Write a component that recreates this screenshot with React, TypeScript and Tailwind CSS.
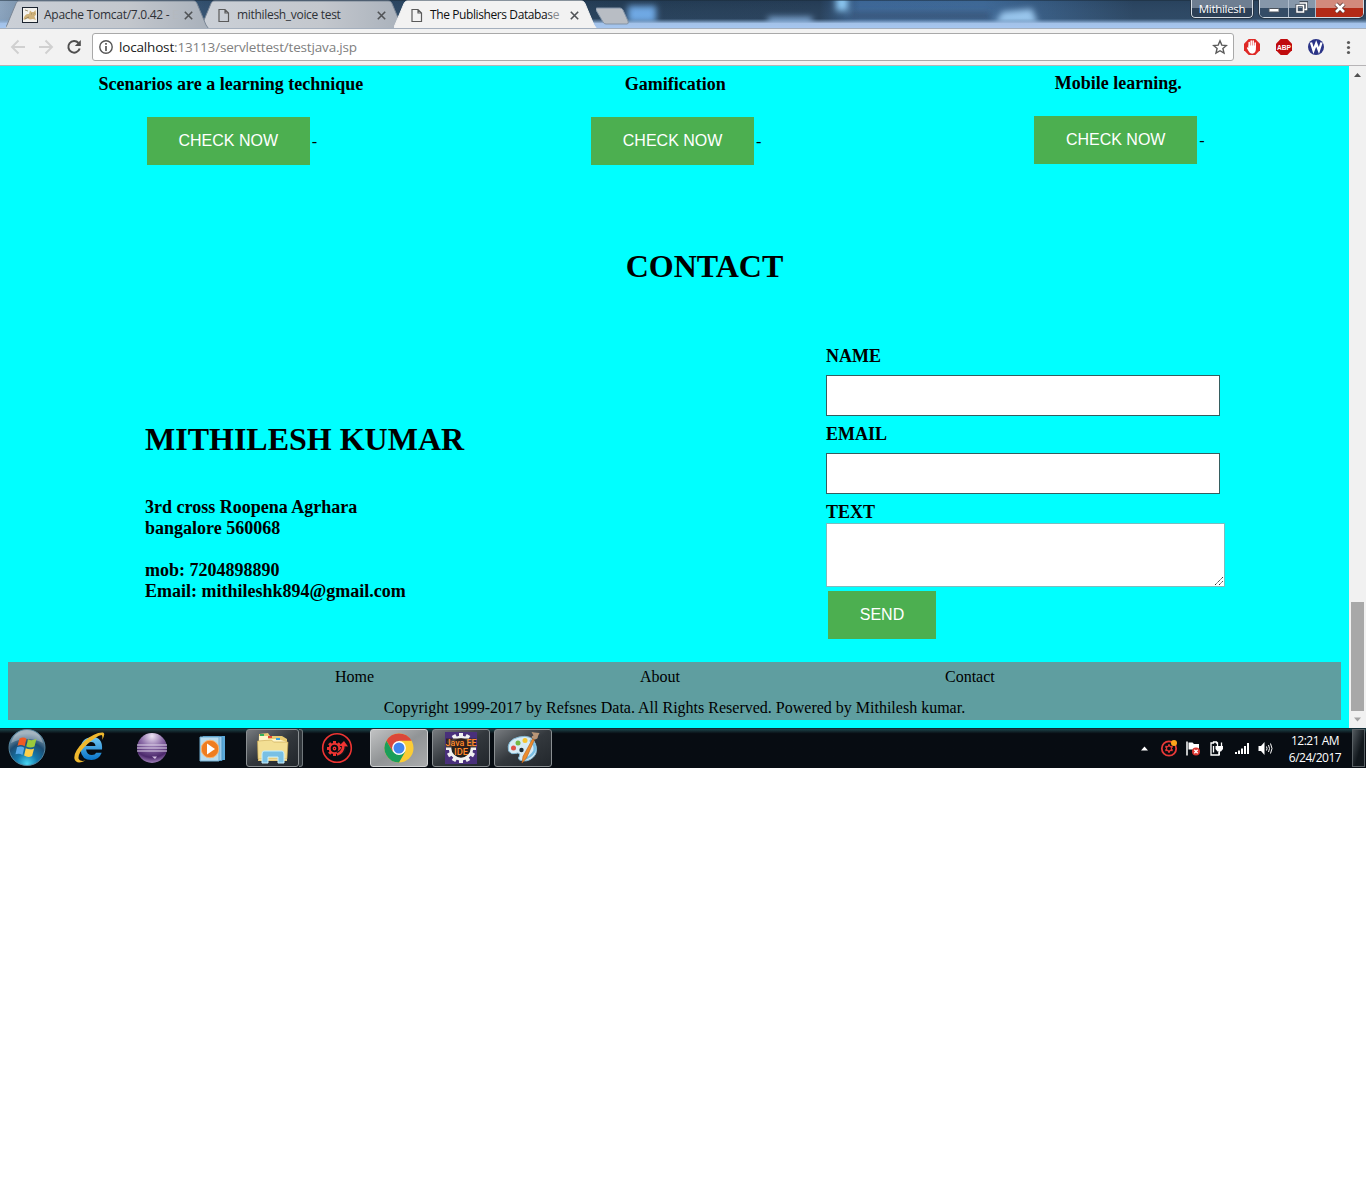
import React from "react";

const UI = "font-['Open_Sans','Noto_Sans',sans-serif]";

function TabShape({ active }: { active?: boolean }) {
  return (
    <svg className="absolute inset-0" width="203" height="28" viewBox="0 0 203 28">
      <defs>
        <linearGradient id="tabIdle" x1="0" y1="0" x2="1" y2="0">
          <stop offset="0" stopColor="#cbd0d7" />
          <stop offset=".6" stopColor="#c3c7cd" />
          <stop offset="1" stopColor="#a9b1bb" />
        </linearGradient>
      </defs>
      <path
        d="M-1 28.500 L1 25 L10 3.500 C11 1.500 12 1 14 1 H187 C189 1 190 1.500 191 3.500 L200 25 L202.500 28.500 Z"
        fill={active ? "#f2f2f2" : "url(#tabIdle)"}
        stroke={active ? "#f2f2f2" : "#7b8796"}
      />
    </svg>
  );
}

function PageIcon() {
  return (
    <svg width="12" height="15" viewBox="0 0 12 15" fill="none" stroke="#5a5a5a" strokeWidth="1.2">
      <path d="M1 1.500h6l3.500 3.500v8.500H1zM7 1.500V5h3.500" />
    </svg>
  );
}

function CatIcon() {
  return (
    <svg width="16" height="16" viewBox="0 0 16 16">
      <rect x=".5" y=".5" width="15" height="15" fill="#f3f2ee" stroke="#1b2430" />
      <path d="M1.500 12c1-4 3-5.500 5.500-5L8 3.500l1.700 1.600h2L13.500 3l.6 4.500-1.700 2L14 13l-3-1-3 .5-3-1.500-3 2z" fill="#cfb27a" />
      <path d="M9 6.500l1 .8M12.500 6.300l-.8.8M3 12l4-2M3 3l3 1" stroke="#7d6d48" strokeWidth=".7" />
    </svg>
  );
}

function CloseX() {
  return (
    <svg width="9" height="9" viewBox="0 0 9 9">
      <path d="M.8.800l7.400 7.400M8.200.8L.8 8.200" stroke="#505356" strokeWidth="1.600" />
    </svg>
  );
}

function TitleBar() {
  return (
    <div className="relative flex h-7 overflow-hidden bg-[#243c56]">
      <svg className="absolute inset-0" width="1366" height="28" viewBox="0 0 1366 28">
        <defs>
          <linearGradient id="aero" x1="0" x2="1366" y1="0" y2="0" gradientUnits="userSpaceOnUse">
            <stop offset="0" stopColor="#8ca4bd" />
            <stop offset=".03" stopColor="#6c839b" />
            <stop offset=".15" stopColor="#304d6b" />
            <stop offset=".45" stopColor="#223a52" />
            <stop offset=".6" stopColor="#243b54" />
            <stop offset=".63" stopColor="#3b6595" />
            <stop offset=".72" stopColor="#3c6694" />
            <stop offset=".83" stopColor="#28425d" />
            <stop offset="1" stopColor="#28425c" />
          </linearGradient>
          <linearGradient id="lowerGlow" x1="0" x2="0" y1="0" y2="1">
            <stop offset="0" stopColor="#a7c7ef" stopOpacity="0" />
            <stop offset=".66" stopColor="#6b90b6" stopOpacity=".1" />
            <stop offset=".84" stopColor="#a3c2e9" />
            <stop offset="1" stopColor="#a6c6ef" />
          </linearGradient>
          <filter id="soft" x="-50%" y="-80%" width="200%" height="260%">
            <feGaussianBlur stdDeviation="3" />
          </filter>
        </defs>
        <rect width="1366" height="28" fill="url(#aero)" />
        <g filter="url(#soft)">
          <rect x="850" y="13" width="140" height="6" fill="#304e6f" />
          <rect x="628" y="6" width="28" height="17" fill="#6ea9e6" />
          <rect x="768" y="17" width="44" height="8" fill="#80a9d6" />
          <rect x="836" y="-4" width="12" height="15" fill="#8bc7f2" />
          <path d="M995 24l7-12 30-3 6 15z" fill="#9dcbf2" />
        </g>
        <rect width="1366" height="28" fill="url(#lowerGlow)" />
        <rect width="1366" height="1" fill="#1a2938" opacity=".5" />
      </svg>
      <div className="relative z-10 ml-[6px] flex w-[203px] shrink-0">
        <TabShape />
        <div className={`relative flex w-full items-center pl-4 pt-0.5 ${UI}`}>
          <CatIcon />
          <span className="ml-[6px] w-[130px] whitespace-nowrap text-[12px] tracking-[-0.27px] text-[#2e3136]">Apache Tomcat/7.0.42 - <span className="text-[#b4b9bf]">E</span></span>
          <span className="ml-[10px]"><CloseX /></span>
        </div>
      </div>
      <div className="relative -ml-[8px] flex w-[203px] shrink-0">
        <TabShape />
        <div className={`relative flex w-full items-center pl-[17px] pt-0.5 ${UI}`}>
          <PageIcon />
          <span className="ml-[7px] w-[130px] whitespace-nowrap text-[12px] tracking-[-0.31px] text-[#2e3136]">mithilesh_voice test</span>
          <span className="ml-[10px]"><CloseX /></span>
        </div>
      </div>
      <div className="relative z-20 -ml-[10px] flex w-[203px] shrink-0">
        <TabShape active />
        <div className={`relative flex w-full items-center pl-[17px] pt-0.5 ${UI}`}>
          <PageIcon />
          <span className="ml-[7px] w-[130px] whitespace-nowrap text-[12px] tracking-[-0.4px] text-[#101010]">The Publishers Databa<span className="text-[#55585c]">s</span><span className="text-[#8b8e91]">e</span></span>
          <span className="ml-[10px]"><CloseX /></span>
        </div>
      </div>
      <svg className="relative -ml-px" width="36" height="28" viewBox="0 0 36 28">
        <path d="M2 8h23q2 0 3 2l5 11q1 3-1 3H11q-2 0-3-2L1 10q-1-2 1-2z" transform="translate(-1)" fill="#b8bdc4" stroke="#8293a7" />
      </svg>
      <div className={`relative ml-auto mr-[2px] flex items-start ${UI}`}>
        <div className="mr-[6px] flex h-[18px] w-[62px] items-center justify-center rounded-b-[4px] border border-t-0 border-[#d5dde5] bg-linear-to-b from-[#6e7e91] from-50% to-[#2d4056] to-50% text-[11.5px] tracking-[-0.3px] text-white outline outline-[#263545]">Mithilesh</div>
        <div className="flex h-[18px] overflow-hidden rounded-b-[5px] border border-t-0 border-[#d0dae4] outline outline-[#263545]">
          <div className="flex w-[29px] justify-center border-r border-[#aebccc] bg-linear-to-b from-[#8697aa] from-50% to-[#344c66] to-50%">
            <svg width="14" height="17" viewBox="0 0 14 17"><rect x="2" y="8.500" width="10" height="3.500" rx=".5" fill="#fff" stroke="#4c535c" /></svg>
          </div>
          <div className="flex w-[27px] justify-center border-r border-[#aebccc] bg-linear-to-b from-[#8697aa] from-50% to-[#344c66] to-50%">
            <svg width="14" height="17" viewBox="0 0 14 17" fill="none"><path d="M4.500 2.500h7v7h-2M2 5.500h6.500v6.500h-6.500z" stroke="#414b58" strokeWidth="3" /><path d="M4.500 3h7v6.500h-2M2 5.500h6.500v6.500h-6.500z" stroke="#fff" strokeWidth="1.500" /></svg>
          </div>
          <div className="flex w-[47px] justify-center bg-linear-to-b from-[#d28a7c] from-50% to-[#b32a16] to-50%">
            <svg width="14" height="17" viewBox="0 0 14 17"><path d="M3 4l8 8M11 4l-8 8" stroke="#5b3330" strokeWidth="4.200" /><path d="M3 4l8 8M11 4l-8 8" stroke="#fff" strokeWidth="2.600" /></svg>
          </div>
        </div>
      </div>
    </div>
  );
}

function Toolbar() {
  return (
    <div className="flex h-[38px] items-center border-y border-t-[#a4afbd] border-b-[#b6b4b6] bg-[#f2f2f2]">
      <svg className="shrink-0" width="92" height="36" viewBox="0 0 92 36" fill="none">
        <path d="M25 18H12.500M18.500 11.500L12 18l6.500 6.500" stroke="#d0d0d0" strokeWidth="1.900" />
        <path d="M39 18h12.500M45.500 11.500L52 18l-6.500 6.500" stroke="#d0d0d0" strokeWidth="1.900" />
        <path d="M78.500 14A5.800 5.800 0 1 0 79.700 19.500" stroke="#4e4e4e" strokeWidth="2" />
        <path d="M80.800 11v6h-6z" fill="#4e4e4e" />
      </svg>
      <div className="flex h-7 w-[1142px] items-center rounded-[3px] border border-[#a9a9a9] bg-white pl-[6px] pr-[5px]">
        <svg width="14" height="14" viewBox="0 0 14 14" fill="none" stroke="#555" strokeWidth="1.400"><circle cx="7" cy="7" r="6.200" /><path d="M7 6v5M7 3v1.700" strokeWidth="1.700" /></svg>
        <span className={`ml-[6px] text-[13.500px] tracking-[-0.17px] text-[#808080] ${UI}`}><span className="text-[#202020]">localhost</span>:13113/servlettest/testjava.jsp</span>
        <svg className="ml-auto" width="16" height="16" viewBox="0 0 16 16" fill="none" stroke="#5a5a5a" strokeWidth="1.400"><path d="M8 1.800l1.800 4.300 4.600.4-3.500 3 1.100 4.600L8 11.700l-4 2.400 1.100-4.600-3.500-3 4.600-.4z" /></svg>
      </div>
      <svg width="132" height="36" viewBox="0 0 132 36">
        <path d="M14.700 10h6.600l4.700 4.700v6.600L21.300 26h-6.600L10 21.300v-6.600z" fill="#df2926" />
        <path d="M15.200 18v-4.500M17.200 17v-5M19.200 17v-5M21.200 18v-4" stroke="#fff" strokeWidth="1.500" strokeLinecap="round" />
        <path d="M14.500 16.500h7.400v4q-.4 4-3.700 4.200-2.600 0-3.700-2.700l-1.700-3q.6-1.400 1.700-.2z" fill="#fff" />
        <path d="M46.700 10h6.600l4.700 4.700v6.600L53.300 26h-6.600L42 21.300v-6.600z" fill="#c00b0d" />
        <text x="43" y="20.900" fontFamily="Liberation Sans, sans-serif" fontWeight="bold" fontSize="8" fill="#fff" textLength="14" lengthAdjust="spacingAndGlyphs">ABP</text>
        <circle cx="82" cy="18" r="8" fill="#2b3487" />
        <path d="M77 13.500l2.500 8 2.700-7 2.700 7 2.600-8" fill="none" stroke="#fff" strokeWidth="2.300" />
        <g fill="#5a5a5a"><circle cx="114.500" cy="13.500" r="1.600" /><circle cx="114.500" cy="18.500" r="1.600" /><circle cx="114.500" cy="23.500" r="1.600" /></g>
      </svg>
    </div>
  );
}

function Course({ title, raised }: { title: string; raised?: boolean }) {
  return (
    <div className={raised ? "-mt-px flex flex-col items-center pr-px" : "flex flex-col items-center pl-[1.5px]"}>
      <h4 className="text-[18px] leading-[21px] font-bold whitespace-nowrap">{title}</h4>
      <div className="mt-[22px] flex items-center">
        <button className="mx-[2px] h-12 w-[163px] bg-[#4caf50] font-['Liberation_Sans',sans-serif] text-[16px] text-white">CHECK NOW</button>
        <span className="pt-0.5 text-[16px]">-</span>
      </div>
    </div>
  );
}

function WebPage() {
  return (
    <main className="h-[662px] w-[1349px] overflow-hidden bg-[#00ffff] px-2 font-['Liberation_Serif',serif] text-black">
      <section className="grid grid-cols-3 pt-[8px]">
        <Course title="Scenarios are a learning technique" />
        <Course title="Gamification" />
        <Course title="Mobile learning." raised />
      </section>
      <h1 className="mt-[83px] pl-[60px] text-center text-[32px] leading-[37px] font-bold">CONTACT</h1>
      <section className="flex h-[377px] pl-[137px]">
        <div className="w-[681px] pt-[136px] font-bold">
          <h1 className="text-[32px] leading-[37px]">MITHILESH KUMAR</h1>
          <p className="mt-[39px] text-[18px] leading-[21px]">
            3rd cross Roopena Agrhara<br />bangalore 560068<br /><br />mob: 7204898890<br />Email: mithileshk894@gmail.com
          </p>
        </div>
        <form className="flex w-[399px] flex-col items-start pt-[61px] text-[18px] leading-[21px] font-bold">
          <label>NAME</label>
          <input className="mt-[8px] h-[41px] w-[394px] border border-[#355f60] bg-white" />
          <label className="mt-[8px]">EMAIL</label>
          <input className="mt-[8px] h-[41px] w-[394px] border border-[#355f60] bg-white" />
          <label className="mt-[8px]">TEXT</label>
          <div className="flex h-[64px] w-[399px] items-end justify-end border border-[#7cbcbe] bg-white">
            <svg width="10" height="10" viewBox="0 0 10 10" stroke="#333" strokeWidth="1"><path d="M1 9l8-8M5 9l4-4" strokeDasharray="1.400 .6" /></svg>
          </div>
          <button type="button" className="mt-[4px] ml-[2px] h-12 w-[108px] shrink-0 bg-[#4caf50] pb-0.5 font-['Liberation_Sans',sans-serif] text-[16px] font-normal text-white">SEND</button>
        </form>
      </section>
      <footer className="h-[58px] bg-[#5f9ea0] pt-[6px] text-[16px] leading-[18px]">
        <nav className="flex pl-[327px]">
          <a className="w-[305px]">Home</a>
          <a className="w-[305px]">About</a>
          <a>Contact</a>
        </nav>
        <p className="mt-[13px] text-center">Copyright 1999-2017 by Refsnes Data. All Rights Reserved. Powered by Mithilesh kumar.</p>
      </footer>
    </main>
  );
}

function Scrollbar() {
  return (
    <div className="flex h-[662px] w-[17px] flex-col items-center bg-[#f1f1f1]">
      <svg width="17" height="17" viewBox="0 0 17 17"><path d="M5 11l3.500-4L12 11z" fill="#505050" /></svg>
      <div className="mt-[519px] h-[109px] w-[13px] bg-[#a8a8a8]" />
      <svg width="17" height="17" viewBox="0 0 17 17"><path d="M5 6.500L8.500 10.500l3.500-4z" fill="#a3a3a3" /></svg>
    </div>
  );
}

const FRAME = "flex h-[38px] shrink-0 items-center justify-center rounded-[3px] border border-[#8a8f92] bg-linear-to-br from-[#777b7f] via-[#33383d] to-[#22272c]";

function GearTeeth({ r, color, n = 12, w = 4 }: { r: number; color: string; n?: number; w?: number }) {
  return (
    <g fill={color} stroke="none">
      {Array.from({ length: n }, (_, i) => (
        <rect key={i} x={-w / 2} y={-r} width={w} height={w} transform={`rotate(${(i * 360) / n})`} />
      ))}
    </g>
  );
}

function StartIcon() {
  return (
    <svg width="40" height="38" viewBox="0 0 40 38">
      <defs>
        <radialGradient id="orb" cx=".5" cy=".95" r=".85">
          <stop offset="0" stopColor="#49d8f4" /><stop offset=".35" stopColor="#1479ac" /><stop offset=".7" stopColor="#1d4c72" /><stop offset="1" stopColor="#8299a8" />
        </radialGradient>
      </defs>
      <circle cx="20" cy="18.500" r="18" fill="url(#orb)" stroke="#52849e" />
      <path d="M4 14Q20 6 36 14Q32 1 20 1T4 14z" fill="#fff" opacity=".28" />
      <path d="M12.500 9.500q4-2 7 .3l-1.800 7.400q-3.500-2-7.200-.5z" fill="#ef5a24" />
      <path d="M21 10.300q4 2 8.500-.5l-2 7.700q-4 2-8.200 0z" fill="#9bc93c" />
      <path d="M10 18.200q4-1.600 7.300.5L15.500 26q-3.500-2-7-.7z" fill="#57a8e8" />
      <path d="M18.800 19.300q4 2 8.300.2l-2 7.500q-4 2-8-.4z" fill="#fcd04b" />
    </svg>
  );
}

function ExplorerE() {
  return (
    <svg width="34" height="34" viewBox="0 0 34 34">
      <defs><linearGradient id="ie" x1="0" y1="0" x2="0" y2="1"><stop offset="0" stopColor="#72c8f2" /><stop offset="1" stopColor="#0874c9" /></linearGradient></defs>
      <path d="M30 18.500H14q1 5.500 6 5.500 3 0 4.200-2.200h5.500q-2.700 7.200-10.200 7.200-10 0-11-10 0-12 11.500-13 11 0 10 12.500zM14 15h9.500q-.5-4-4.500-4-4 0-5 4z" fill="url(#ie)" />
      <path d="M30 9Q34 2.500 31 1.500 23 1 12.500 10 1 21 2.500 28q2 6 11 1.500-6 1.500-7-2-.5-6 8.500-14Q25 4.500 29.500 4q1.500 1 .5 5z" fill="#efb82d" />
    </svg>
  );
}

function EclipseIcon() {
  return (
    <svg width="32" height="32" viewBox="0 0 32 32">
      <defs><radialGradient id="ecl" cx=".5" cy=".1" r=".95"><stop offset="0" stopColor="#eee4f5" /><stop offset=".4" stopColor="#8c6da8" /><stop offset=".75" stopColor="#4b286b" /><stop offset="1" stopColor="#b698ce" /></radialGradient></defs>
      <circle cx="16" cy="16" r="15" fill="url(#ecl)" />
      <path d="M1 13h30M1 16h30M1 19h30" stroke="#e2d7eb" strokeWidth="1.200" />
      <path d="M16 24.500h5l-2 2.500z" fill="#d4bfe2" />
    </svg>
  );
}

function MediaIcon() {
  return (
    <svg width="30" height="28" viewBox="0 0 30 28">
      <path d="M8 1h19v24H8z" fill="#5caada" /><path d="M5 1.500h19v24H5z" fill="#9dcdec" stroke="#4d96c4" /><path d="M2 2h19v24H2z" fill="#b8dcef" stroke="#71afd2" />
      <circle cx="12" cy="14" r="8.800" fill="#ef7d20" stroke="#f8b573" />
      <path d="M9 8.500l8 5.500-8 5.500z" fill="#fff" />
    </svg>
  );
}

function FolderIcon() {
  return (
    <svg width="34" height="34" viewBox="0 0 34 34">
      <path d="M3 3l9-1 2 3h12l5 3v22H2z" fill="#e8ca72" />
      <path d="M3 5h9v3h10l9 3v18H3z" fill="#fff5c8" />
      <path d="M1.500 10l14-1 2 2h14.500l-1 17H2z" fill="#f3df94" stroke="#c6a34b" strokeWidth=".6" />
      <path d="M4 3h4v2H4z" fill="#32b357" /><path d="M12 5h4v2h-4z" fill="#e44634" /><path d="M20 7h4v2h-4z" fill="#38a1de" />
      <path d="M6 23q0-3 2-3h18q2 0 2 3v9h-6v-6H12v6H6z" fill="#79c0e4" stroke="#c7effc" />
    </svg>
  );
}

function RedGearIcon() {
  return (
    <svg width="32" height="32" viewBox="0 0 32 32" fill="none" stroke="#ed3432">
      <circle cx="16" cy="16" r="14.300" strokeWidth="1.600" />
      <g transform="translate(13.500 16.500)"><GearTeeth r={7.5} color="#ed3432" n={8} w={3} /><circle r="4.800" strokeWidth="2" /><circle r="1.200" strokeWidth="1.400" /></g>
      <path d="M16 22q7-1 7-9" stroke="#10151a" strokeWidth="5" />
      <path d="M16 22.500q6.500-2 6.500-10" strokeWidth="2.600" /><path d="M18 14l5-5 4 5.500z" fill="#ed3432" stroke="none" />
    </svg>
  );
}

function ChromeIcon() {
  return (
    <svg width="32" height="32" viewBox="0 0 32 32">
      <circle cx="16" cy="16" r="14.500" fill="#fbcc35" />
      <path d="M3.440 8.750A14.500 14.500 0 0 1 28.560 8.750H16L9.700 19.600z" fill="#db4739" />
      <path d="M3.440 8.750A14.500 14.500 0 0 0 16 30.500l6.300-10.900H9.700z" fill="#1b9e5a" />
      <circle cx="16" cy="16" r="6.900" fill="#fff" /><circle cx="16" cy="16" r="5.500" fill="#4285ee" />
    </svg>
  );
}

function JavaIcon() {
  return (
    <svg width="34" height="32" viewBox="0 0 34 32">
      <rect x="1" width="32" height="32" fill="#49307b" />
      <g transform="translate(17 16)"><GearTeeth r={15} color="#f1f1f1" n={12} w={4} /><circle r="11" fill="#202020" stroke="#f1f1f1" strokeWidth="2.600" /></g>
      <path d="M2 6.500h30v9H24v7H10v-7H2z" fill="#30201b" opacity=".85" />
      <g fontFamily="Roboto, sans-serif" fontWeight="500" fontSize="8.500" fill="#ff8b2c">
        <text x="1.500" y="14" textLength="31" lengthAdjust="spacingAndGlyphs">Java EE</text>
        <text x="10" y="22.500" textLength="14" lengthAdjust="spacingAndGlyphs">IDE</text>
      </g>
    </svg>
  );
}

function PaintIcon() {
  return (
    <svg width="34" height="34" viewBox="0 0 34 34">
      <path d="M2.500 20Q0 9 13 6t16.500 7q3 8-2 13-6 6-14 3-2-2 0-4 1-4-4-2.500-4 1.500-7-2.500z" fill="#d6ebf6" stroke="#81b7d2" />
      <path d="M24 9q6 5 4.500 11-4 7-11 8" fill="none" stroke="#79bee4" strokeWidth="2.500" />
      <circle cx="7.500" cy="17" r="2.500" fill="#df5148" /><circle cx="12" cy="12" r="2.500" fill="#76b845" /><circle cx="19" cy="9.500" r="2.500" fill="#f5c532" /><circle cx="15.500" cy="19" r="2.200" fill="#1e2d38" />
      <path d="M26.500 8l2 .6-8 18.400-4.500 5 1-6.500z" fill="#ed8d2d" stroke="#b85d17" strokeWidth=".6" />
      <path d="M25.500 7q0-2.500 2-2.500l-2-3.500 3 .5 5 .5-1.500 3q0 3-3 3.500z" fill="#ba9677" />
    </svg>
  );
}

function Tray() {
  return (
    <svg width="140" height="38" viewBox="0 0 140 38" fill="none">
      <path d="M1 21.500L4.500 17.500l3.500 4z" fill="#fff" />
      <circle cx="29" cy="19.500" r="7.200" stroke="#e83937" strokeWidth="1.800" />
      <g transform="translate(29 19.500)"><GearTeeth r={4.200} color="#e83937" n={6} w={1.900} /><circle r="2.500" stroke="#e83937" strokeWidth="1.200" /></g>
      <circle cx="34" cy="14" r="3" fill="#fda51a" />
      <path d="M47 12.500v14" stroke="#fff" strokeWidth="1.500" /><path d="M48.500 13.500h4l1.500 1.500h5v6.500h-5l-1.500-1h-4z" fill="#fff" />
      <circle cx="56" cy="22.500" r="4" fill="#dd3630" /><path d="M54.300 20.800l3.400 3.400M57.700 20.800l-3.400 3.400" stroke="#fff" strokeWidth="1.300" />
      <path d="M78 14h-1.500v-1h-3v1H71v12h8v-3M73.500 17v6.500" stroke="#fff" strokeWidth="1.300" />
      <path d="M75.500 17h7.500v3l-2 2.500h-3.500L75.500 20z" fill="#fff" /><path d="M77.500 13.500V18M81.500 13.500V18M79.300 22v4" stroke="#fff" strokeWidth="1.300" />
      <path d="M95 23h2v2h-2zM98 21.500h2V25h-2zM101 19.500h2V25h-2zM104 17h2v8h-2zM107 14h2v11h-2z" fill="#fff" />
      <path d="M118.500 17h2.500l3.500-4v13l-3.500-4h-2.500z" fill="#fff" />
      <path d="M126.500 17.500q1 2 0 4M128.500 16q2 3.500 0 7M130.500 14.500q3 5 0 10" stroke="#fff" strokeWidth="1" />
    </svg>
  );
}

function Taskbar() {
  return (
    <div className="flex h-10 items-start border-t border-[#122b34] bg-[#060b10] bg-linear-to-b from-[#1c454b] to-[#070c12] to-12%">
      <div className="ml-[7px]"><StartIcon /></div>
      <div className="ml-[25px] pt-[2px]"><ExplorerE /></div>
      <div className="ml-[30px] pt-[3px]"><EclipseIcon /></div>
      <div className="ml-[30px] pt-[6px]"><MediaIcon /></div>
      <div className={`ml-[18px] w-[53px] ${FRAME}`}><FolderIcon /></div>
      <div className="h-[38px] w-[4px] rounded-r-[3px] border-y border-r border-[#70777b] bg-[#30363b]" />
      <div className="ml-[18px] pt-[3px]"><RedGearIcon /></div>
      <div className="ml-[17px] flex h-[38px] w-[58px] shrink-0 items-center justify-center rounded-[3px] border border-[#d0d2d3] bg-linear-to-br from-[#c1c2c3] via-[#919496] to-[#a9abac]"><ChromeIcon /></div>
      <div className={`ml-[4px] w-[58px] ${FRAME}`}><JavaIcon /></div>
      <div className={`ml-[4px] w-[58px] ${FRAME}`}><PaintIcon /></div>
      <div className="ml-auto"><Tray /></div>
      <div className={`w-[70px] pt-[3px] text-center text-[12px] leading-[17px] tracking-[-0.5px] text-white ${UI}`}>12:21 AM<br />6/24/2017</div>
      <div className="ml-[2px] h-[38px] w-[13px] border border-[#596064] bg-linear-to-br from-[#52595e] to-[#11171c] to-60%" />
      <div className="w-px" />
    </div>
  );
}

export default function App() {
  return (
    <div className="min-h-[1200px] w-[1366px] bg-white">
      <TitleBar />
      <Toolbar />
      <div className="flex">
        <WebPage />
        <Scrollbar />
      </div>
      <Taskbar />
    </div>
  );
}
